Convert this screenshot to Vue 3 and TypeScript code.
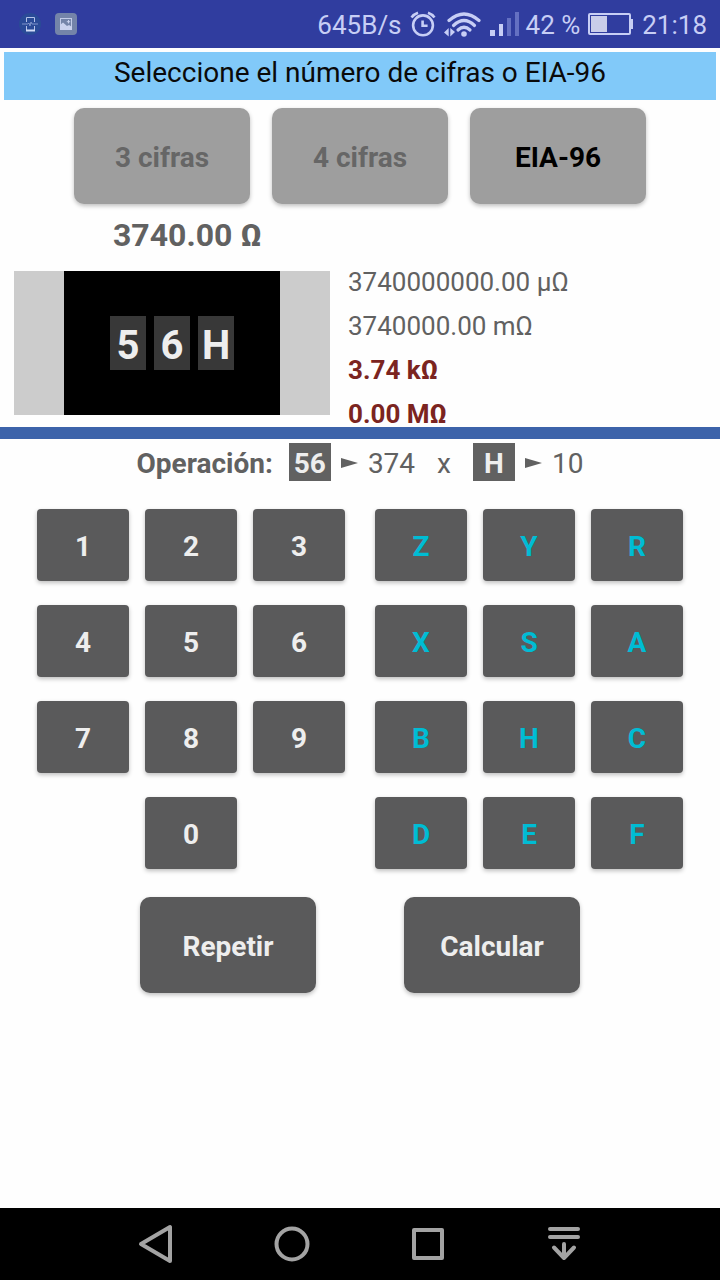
<script setup lang="ts">
import { computed, ref } from 'vue'

type Mode = '3 cifras' | '4 cifras' | 'EIA-96'

const modes: Mode[] = ['3 cifras', '4 cifras', 'EIA-96']
const digits: string[] = ['1', '2', '3', '4', '5', '6', '7', '8', '9', '0']
const letters: string[] = ['Z', 'Y', 'R', 'X', 'S', 'A', 'B', 'H', 'C', 'D', 'E', 'F']
const multipliers: Record<string, number> = {
  Z: 0.001, Y: 0.01, R: 0.01, X: 0.1, S: 0.1, A: 1,
  B: 10, H: 10, C: 100, D: 1000, E: 10000, F: 100000,
}

const mode = ref<Mode>('EIA-96')
const entry = ref<string[]>(['5', '6', 'H'])
const solved = ref<string[]>(['5', '6', 'H'])

const index = computed(() => solved.value.slice(0, 2).join(''))
const letter = computed(() => solved.value[2] ?? 'A')
const base = computed(() => Math.round(100 * Math.pow(10, (Number(index.value) - 1) / 96)))
const factor = computed(() => multipliers[letter.value] ?? 1)
const ohms = computed(() => base.value * factor.value)

const conversions = computed(() => [
  { text: (ohms.value * 1e6).toFixed(2) + ' µΩ', strong: false },
  { text: (ohms.value * 1e3).toFixed(2) + ' mΩ', strong: false },
  { text: (ohms.value / 1e3).toFixed(2) + ' kΩ', strong: true },
  { text: (ohms.value / 1e6).toFixed(2) + ' MΩ', strong: true },
])

function press(key: string): void {
  const wantsLetter = entry.value.length === 2
  const isLetter = key in multipliers
  if (entry.value.length < 3 && wantsLetter === isLetter) entry.value.push(key)
}

function repeat(): void {
  entry.value = []
}

function calculate(): void {
  if (entry.value.length === 3) solved.value = [...entry.value]
}
</script>

<template>
  <div class="screen">
    <header class="status">
      <div class="notices">
        <svg width="24" height="24" viewBox="0 0 24 24" aria-hidden="true">
          <circle cx="12" cy="12" r="11" fill="#2a4b97" />
          <path d="M8.500 10V5.500h8V10M8.500 14v4M16.500 14v4" fill="none" stroke="#b5c3ea" />
          <path d="M8 18.500h9" stroke="#d3dbf6" stroke-width="2" />
          <path d="M4 12h6l1-1 1 3 1-4 1 2h6" fill="none" stroke="#7f95cb" />
        </svg>
        <svg width="24" height="24" viewBox="0 0 24 24" aria-hidden="true">
          <rect x="1" y="1" width="22" height="22" rx="4" fill="#7484a9" />
          <rect x="6.500" y="6.500" width="11" height="11" fill="none" stroke="#c3cce8" />
          <path d="M6 13l3-2.500 4 3.500 2-1 3 2v3H6z" fill="#c9d1ee" />
          <path d="M14.500 8v3.400M12.800 9.700h3.400" stroke="#c9d1ee" />
        </svg>
      </div>
      <div class="system">
        <span>645B/s</span>
        <svg class="alarm" width="26" height="26" viewBox="0 0 26 26" aria-hidden="true">
          <g fill="none" stroke="#c7cef5" stroke-width="2.600">
            <circle cx="13" cy="14.300" r="9.900" />
            <path d="M1.500 6.500Q4 3 8 1.700M24.500 6.500Q22 3 18 1.700" />
            <path d="M12.600 9.500v5.300h5" />
          </g>
        </svg>
        <svg class="wifi" width="38" height="26" viewBox="0 0 38 26" aria-hidden="true">
          <g fill="none" stroke="#c7cef5" stroke-width="3.200" stroke-linecap="round">
            <path d="M5 9.500Q20 -3.500 35 9.500" />
            <path d="M9.500 14.500Q20 4.500 30.500 14.500" />
            <path d="M14 19Q20 13.500 26 19" />
          </g>
          <circle cx="20" cy="23" r="2.800" fill="#c7cef5" />
          <path d="M0 21.500L4.700 17v8.500zM6.300 17v8.500L11 21z" fill="#c7cef5" />
        </svg>
        <svg class="signal" width="30" height="26" viewBox="0 0 30 26" aria-hidden="true">
          <path d="M0 19h5v6H0zM9 13h4v12H9z" fill="#c7cef5" />
          <path d="M17 7h4v18h-4zM25 1h4v24h-4z" fill="#6470c2" />
        </svg>
        <span>42 %</span>
        <svg class="battery" width="46" height="26" viewBox="0 0 46 26" aria-hidden="true">
          <rect x="1" y="3" width="41" height="20" rx="1" fill="none" stroke="#c7cef5" stroke-width="2" />
          <rect x="3" y="5" width="16" height="16" fill="#c9cde9" />
          <path d="M43 8h2v10h-2z" fill="#c7cef5" />
        </svg>
        <span>21:18</span>
      </div>
    </header>

    <main>
      <h1 class="banner">Seleccione el número de cifras o EIA-96</h1>

      <div class="modes">
        <button
          v-for="item in modes"
          :key="item"
          type="button"
          class="large mode"
          :class="{ active: item === mode }"
          :aria-pressed="item === mode"
          @click="mode = item"
        >{{ item }}</button>
      </div>

      <section class="result">
        <output class="ohms">{{ ohms.toFixed(2) }} Ω</output>
        <div class="details">
          <div class="resistor">
            <div class="body">
              <span v-for="(mark, i) in entry" :key="i" class="mark">{{ mark }}</span>
            </div>
          </div>
          <ul class="units">
            <li v-for="row in conversions" :key="row.text" :class="{ strong: row.strong }">{{ row.text }}</li>
          </ul>
        </div>
      </section>

      <section class="operation">
        <strong class="caption">Operación:</strong>
        <span class="chip">{{ index }}</span>
        <svg class="arrow" width="17" height="10" viewBox="0 0 17 10" aria-hidden="true">
          <path d="M0 0L17 5 0 10z" fill="#616161" />
        </svg>
        <span>{{ base }}</span>
        <span class="times">x</span>
        <span class="chip">{{ letter }}</span>
        <svg class="arrow" width="17" height="10" viewBox="0 0 17 10" aria-hidden="true">
          <path d="M0 0L17 5 0 10z" fill="#616161" />
        </svg>
        <span>{{ factor }}</span>
      </section>

      <section class="keypad">
        <div class="keys">
          <button
            v-for="key in digits"
            :key="key"
            type="button"
            class="key"
            :class="{ zero: key === '0' }"
            @click="press(key)"
          >{{ key }}</button>
        </div>
        <div class="keys">
          <button
            v-for="key in letters"
            :key="key"
            type="button"
            class="key letter"
            @click="press(key)"
          >{{ key }}</button>
        </div>
      </section>

      <div class="actions">
        <button type="button" class="large" @click="repeat">Repetir</button>
        <button type="button" class="large" @click="calculate">Calcular</button>
      </div>
    </main>

    <nav class="navigation">
      <button type="button" aria-label="Atrás">
        <svg width="36" height="40" viewBox="0 0 36 40">
          <path d="M3 20L32 3v34z" />
        </svg>
      </button>
      <button type="button" aria-label="Inicio">
        <svg width="36" height="40" viewBox="0 0 36 40">
          <circle cx="18" cy="20" r="15.500" />
        </svg>
      </button>
      <button type="button" aria-label="Recientes">
        <svg width="36" height="40" viewBox="0 0 36 40">
          <rect x="4" y="6" width="28" height="28" />
        </svg>
      </button>
      <button type="button" aria-label="Notificaciones">
        <svg width="36" height="40" viewBox="0 0 36 40">
          <path d="M4 5h28M4 13h28M18 20v14M8 23.500l10 10.500 10-10.500" />
        </svg>
      </button>
    </nav>
  </div>
</template>

<style>
body {
  margin: 0;
  background: #fefefe;
}
</style>

<style scoped>
.screen {
  display: flex;
  flex-direction: column;
  min-height: 100vh;
  font-family: Roboto, "Liberation Sans", sans-serif;
  font-size: 28px;
  color: #616161;
}

button {
  border: 0;
  padding: 0;
  font-family: inherit;
  font-size: 28px;
  font-weight: 700;
  cursor: pointer;
}

.status {
  display: flex;
  justify-content: space-between;
  align-items: center;
  height: 48px;
  padding: 0 13px 0 18px;
  background: #303d9f;
  color: #c7cef5;
  font-size: 26px;
}

.notices,
.system {
  display: flex;
  align-items: center;
}

.notices {
  gap: 12px;
}

.system span {
  padding-top: 2px;
  line-height: 46px;
}

.alarm {
  margin-left: 8px;
}

.wifi {
  margin-left: 8px;
}

.signal {
  margin: 0 6px 0 8px;
}

.battery {
  margin: 0 8px;
}

main {
  flex: 1;
}

.banner {
  box-sizing: border-box;
  min-height: 48px;
  margin: 4px 4px 8px;
  background: #81c9f9;
  color: #0a0a0a;
  font-size: 28px;
  font-weight: 400;
  line-height: 42px;
  text-align: center;
}

.modes {
  display: flex;
  justify-content: center;
  gap: 22px;
}

.large {
  width: 176px;
  height: 96px;
  padding-top: 2px;
  border-radius: 10px;
  background: #5a5a5b;
  color: #eeeeee;
  box-shadow: 0 2px 4px rgba(0, 0, 0, 0.25);
}

.mode {
  background: #9e9e9e;
  color: #666666;
}

.mode.active {
  color: #000000;
}

.result {
  box-sizing: border-box;
  height: 235px;
  overflow: hidden;
  border-bottom: 12px solid #3c63aa;
}

.ohms {
  display: block;
  height: 56px;
  padding-left: 113px;
  font-size: 32px;
  font-weight: 700;
  line-height: 62px;
}

.details {
  display: grid;
  grid-template-columns: 316fr 372fr;
  gap: 18px;
  padding-left: 14px;
}

.resistor {
  display: grid;
  grid-template-columns: 50fr 216fr 50fr;
  height: 144px;
  margin-top: 11px;
  background: #cccccc;
}

.body {
  grid-column: 2;
  display: flex;
  justify-content: center;
  align-items: center;
  gap: 8px;
  background: #000000;
}

.mark {
  width: 36px;
  height: 54px;
  background: #383838;
  color: #eeeeee;
  font-size: 40px;
  font-weight: 700;
  line-height: 60px;
  text-align: center;
}

.units {
  margin: 0;
  padding: 0;
  list-style: none;
  font-size: 26px;
  line-height: 44px;
}

.strong {
  color: #7b2420;
  font-weight: 700;
}

.operation {
  display: flex;
  justify-content: center;
  align-items: center;
  height: 38px;
  padding-top: 4px;
  line-height: 42px;
}

.operation > * {
  height: 38px;
}

.caption {
  margin-right: 16px;
}

.chip {
  min-width: 42px;
  background: #616161;
  color: #eeeeee;
  font-weight: 700;
  text-align: center;
}

.operation > .arrow {
  height: 10px;
  margin: 2px 10px 0;
}

.times {
  margin: 0 22px;
}

.keypad {
  display: grid;
  grid-template-columns: 1fr 1fr;
  gap: 30px;
  padding: 28px 37px;
}

.keys {
  display: grid;
  grid-template-columns: repeat(3, 1fr);
  gap: 24px 16px;
}

.key {
  height: 72px;
  padding-top: 2px;
  border-radius: 4px;
  background: #5a5a5b;
  color: #eeeeee;
  box-shadow: 0 2px 4px rgba(0, 0, 0, 0.25);
}

.zero {
  grid-column: 2;
}

.letter {
  color: #00bcd4;
}

.actions {
  display: flex;
  justify-content: center;
  gap: 88px;
  padding-bottom: 28px;
}

.navigation {
  display: grid;
  grid-template-columns: repeat(4, 1fr);
  height: 72px;
  padding: 0 88px;
  background: #000000;
}

.navigation button {
  display: flex;
  justify-content: center;
  align-items: center;
  background: none;
}

.navigation path,
.navigation circle,
.navigation rect {
  fill: none;
  stroke: #a3a3a3;
  stroke-width: 4;
  stroke-linecap: round;
  stroke-linejoin: round;
}
</style>
